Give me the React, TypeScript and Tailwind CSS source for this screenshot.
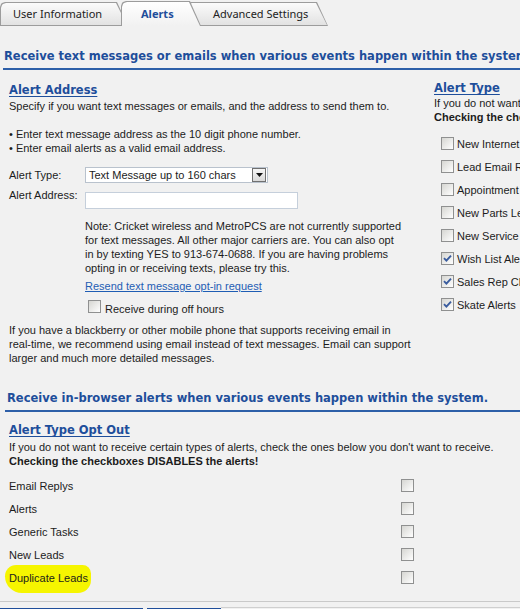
import React from "react";

const heading = "whitespace-nowrap font-['DejaVu_Sans',Verdana,sans-serif] text-[11.5px] font-bold leading-[14px] text-[#1e4e9b]";
const sub = "whitespace-nowrap font-['DejaVu_Sans',Verdana,sans-serif] text-[11.5px] font-bold leading-[14px] text-[#1e4e9b] underline decoration-1 underline-offset-2";

function Box({ checked = false }: { checked?: boolean }) {
  return (
    <span className="flex h-[13px] w-[13px] shrink-0 items-center justify-center border border-[#8f9090] bg-linear-to-br from-[#d6d6d2] to-white">
      {checked && (
        <svg width="9" height="9" viewBox="0 0 9 9">
          <path d="M1 4.2 L3.4 6.6 L8 1.6" fill="none" stroke="#3a5c9e" strokeWidth="1.9" />
        </svg>
      )}
    </span>
  );
}

function Tab({ label, active = false, className = "", pad }: { label: string; active?: boolean; className?: string; pad: string }) {
  return (
    <div
      className={`${className} ${active ? "h-[25px] pb-0" : "h-[24px] pb-[1px]"} bg-[#9c9c9c] px-[1px] pt-[1px] [clip-path:polygon(0_100%,0_5px,1px_2px,2px_1px,5px_0,calc(100%_-_11px)_0,100%_100%)]`}
    >
      <div
        className={`flex h-full items-center ${pad} bg-linear-to-b [clip-path:polygon(0_100%,0_5px,1px_2px,2px_1px,5px_0,calc(100%_-_11px)_0,100%_100%)] font-['Noto_Sans',sans-serif] text-[11px] ${
          active ? "from-white to-[#f1f1f1] font-bold text-[#1e4e9b]" : "from-[#fbfbfb] to-[#e2e2e2] text-[#222]"
        }`}
      >
        {label}
      </div>
    </div>
  );
}

const rightRows: [string, boolean][] = [
  ["New Internet Leads", false],
  ["Lead Email Replies", false],
  ["Appointment Reminders", false],
  ["New Parts Leads", false],
  ["New Service Leads", false],
  ["Wish List Alerts", true],
  ["Sales Rep Changes", true],
  ["Skate Alerts", true],
];

const optOut = ["Email Replys", "Alerts", "Generic Tasks", "New Leads", "Duplicate Leads"];

export default function App() {
  return (
    <div className="h-[609px] w-[520px] overflow-hidden bg-[#f1f1f1] font-['Liberation_Sans',Arial,sans-serif] text-[11px] leading-[14px] text-[#1c1c1c]">
      <div className="w-[700px]">
        <div className="flex h-[26px] items-end">
          <Tab label="User Information" className="w-[128px]" pad="pl-[12px]" />
          <Tab label="Alerts" active className="relative z-10 -ml-[7px] w-[80px]" pad="pl-[19px]" />
          <Tab label="Advanced Settings" className="-ml-[15px] w-[142px]" pad="pl-[26px]" />
        </div>

        <div className="ml-[3px] mt-[23px] border-b-2 border-[#2d5fa8] pb-[5px] pl-[1px]">
          <h2 className={heading}>Receive text messages or emails when various events happen within the system.</h2>
        </div>

        <div className="mt-[13px] flex">
          <div className="w-[434px] shrink-0 pl-[9px]">
            <h3 className={sub}>Alert Address</h3>
            <p className="mt-[2px] whitespace-nowrap">Specify if you want text messages or emails, and the address to send them to.</p>
            <p className="mt-[14px] whitespace-nowrap">
              • Enter text message address as the 10 digit phone number.
              <br />• Enter email alerts as a valid email address.
            </p>
            <div className="mt-[12px] flex items-center">
              <span className="w-[76px]">Alert Type:</span>
              <div className="flex h-[16px] w-[183px] items-center border border-[#b9c2cd] bg-white pl-[3px]">
                <span className="flex-1">Text Message up to 160 chars</span>
                <span className="mr-[1px] flex h-[14px] w-[14px] items-center justify-center border border-[#707070] bg-linear-to-b from-[#f6f6f6] to-[#d9d9d9]">
                  <svg width="7" height="4" viewBox="0 0 7 4">
                    <path d="M0 0 H7 L3.5 4 Z" fill="#111" />
                  </svg>
                </span>
              </div>
            </div>
            <div className="mt-[5px] flex items-start">
              <span className="w-[76px]">Alert Address:</span>
              <div className="mt-[4px] h-[17px] w-[213px] border border-[#c5cfdb] bg-white" />
            </div>
            <p className="ml-[76px] mt-[10px] whitespace-nowrap">
              Note: Cricket wireless and MetroPCS are not currently supported
              <br />
              for text messages. All other major carriers are. You can also opt
              <br />
              in by texting YES to 913-674-0688. If you are having problems
              <br />
              opting in or receiving texts, please try this.
            </p>
            <a className="ml-[76px] mt-[4px] block text-[#1f5db4] underline">Resend text message opt-in request</a>
            <label className="ml-[79px] mt-[7px] flex items-start gap-[4px]">
              <Box />
              <span className="mt-[2px]">Receive during off hours</span>
            </label>
            <p className="mt-[7px] whitespace-nowrap">
              If you have a blackberry or other mobile phone that supports receiving email in
              <br />
              real-time, we recommend using email instead of text messages. Email can support
              <br />
              larger and much more detailed messages.
            </p>
          </div>

          <div className="-mt-[2px]">
            <h3 className={sub}>Alert Type</h3>
            <p className="mt-[1px] whitespace-nowrap">If you do not want to receive certain types of alerts, check the ones below you don't want to receive.</p>
            <p className="whitespace-nowrap font-bold">Checking the checkboxes DISABLES the alerts!</p>
            <div className="mt-[8px]">
              {rightRows.map(([label, checked]) => (
                <div key={label} className="flex h-[23px] items-center gap-[3px] whitespace-nowrap pl-[7px]">
                  <Box checked={checked} />
                  <span>{label}</span>
                </div>
              ))}
            </div>
          </div>
        </div>

        <div className="ml-[5px] mt-[26px] w-[515px] border-b-2 border-[#2d5fa8] pb-[5px] pl-[2px]">
          <h2 className={heading}>Receive in-browser alerts when various events happen within the system.</h2>
        </div>

        <div className="pl-[9px]">
          <h3 className={`${sub} mt-[11px]`}>Alert Type Opt Out</h3>
          <p className="mt-[3px] whitespace-nowrap">If you do not want to receive certain types of alerts, check the ones below you don't want to receive.</p>
          <p className="whitespace-nowrap font-bold">Checking the checkboxes DISABLES the alerts!</p>
          <div className="mt-[6px]">
            {optOut.map((label) => (
              <div key={label} className="flex h-[23px] items-center">
                <span className="w-[392px]">
                  {label === "Duplicate Leads" ? (
                    <span className="relative inline-block">
                      <span className="absolute -left-[4px] -top-[6px] h-[28px] w-[86px] rounded-[12px_9px_14px_18px] bg-[#f6f500]" />
                      <span className="relative">{label}</span>
                    </span>
                  ) : (
                    label
                  )}
                </span>
                <Box />
              </div>
            ))}
          </div>
        </div>

        <div className="mt-[12px] w-[520px] border-t border-[#c9c9c9]" />
        <div className="mt-[5px] flex w-[520px] items-start">
          <div className="mt-px h-[3px] w-[143px] bg-[#1f4e9b]" />
          <div className="ml-[4px] mt-px h-[3px] w-[74px] bg-[#1f4e9b]" />
          <div className="h-px flex-1 bg-[#cfcfcf]" />
        </div>
      </div>
    </div>
  );
}
